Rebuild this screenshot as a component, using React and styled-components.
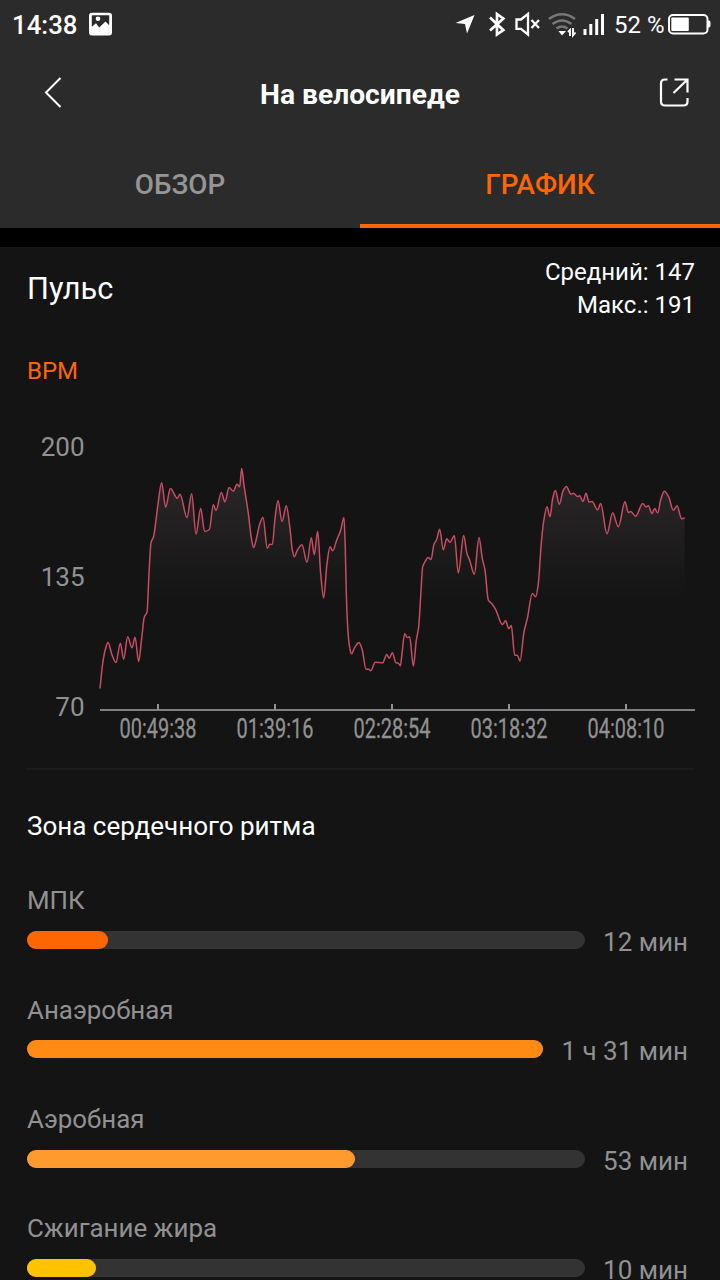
import React from "react";
import styled, { createGlobalStyle } from "styled-components";

const GlobalStyle = createGlobalStyle`
  * { box-sizing: border-box; }
  body {
    margin: 0;
    background: #141414;
    font-family: Roboto, "Noto Sans", sans-serif;
  }
`;

const Screen = styled.div`
  width: 720px;
  height: 1280px;
  overflow: hidden;
  display: flex;
  flex-direction: column;
  background: #141414;
  color: #fff;
`;

const Header = styled.header`
  flex: none;
  height: 228px;
  background: #2b2b2b;
`;

const StatusBar = styled.div`
  display: flex;
  align-items: center;
  justify-content: space-between;
  height: 48px;
  padding: 0 9px 0 12px;
`;

const StatusGroup = styled.div`
  display: flex;
  align-items: center;
`;

const Clock = styled.span`
  font-size: 25.8px;
  font-weight: 500;
  line-height: 32px;
  padding-top: 1px;
  width: 76px;
`;

const BatteryText = styled.span`
  font-size: 24px;
  line-height: 32px;
  padding-top: 1px;
  width: 54px;
  white-space: nowrap;
`;

const NavBar = styled.nav`
  display: grid;
  grid-template-columns: 120px 1fr 120px;
  align-items: center;
  height: 92px;
`;

const IconButton = styled.button`
  display: flex;
  justify-content: ${(p) => (p.$end ? "flex-end" : "flex-start")};
  padding: ${(p) => (p.$end ? "0 29px 4px 0" : "0 0 4px 41px")};
  border: 0;
  background: none;
`;

const Title = styled.h1`
  margin: 0;
  padding-top: 1px;
  text-align: center;
  font-size: 28.2px;
  font-weight: 700;
  line-height: 34px;
`;

const Tabs = styled.div`
  display: grid;
  grid-template-columns: 1fr 1fr;
  height: 88px;
`;

const Tab = styled.button`
  border: 0;
  border-bottom: 4px solid ${(p) => (p.$active ? "#ff6600" : "transparent")};
  padding: 6px 0 0;
  background: none;
  color: ${(p) => (p.$active ? "#ff6600" : "#959595")};
  font: 500 27.8px/34px Roboto, sans-serif;
`;

const Divider = styled.div`
  flex: none;
  height: 19px;
  background: #000;
`;

const PulseHead = styled.section`
  flex: none;
  display: flex;
  justify-content: space-between;
  height: 103px;
  padding: 9px 25px 0 27px;
`;

const PulseTitle = styled.h2`
  margin: 14px 0 0;
  font-size: 30.7px;
  font-weight: 400;
  line-height: 38px;
`;

const Stats = styled.div`
  text-align: right;
  font-size: 24px;
  line-height: 33px;
`;

const Unit = styled.div`
  flex: none;
  height: 80px;
  padding: 6px 27px 0;
  color: #ff6600;
  font-size: 24px;
  line-height: 30px;
`;

const ChartSvg = styled.svg`
  flex: none;
  display: block;
  width: 720px;
  height: 338px;
  font-family: Roboto, sans-serif;
  fill: #919191;
`;

const Rule = styled.div`
  flex: none;
  height: 2px;
  margin: 0 26px;
  background: #1c1c1c;
`;

const Zones = styled.section`
  flex: none;
  padding: 40px 32px 0 27px;
`;

const ZonesTitle = styled.h2`
  margin: 0 0 42.3px;
  font-size: 26px;
  font-weight: 400;
  line-height: 32px;
`;

const Zone = styled.div`
  height: 109.33px;
`;

const ZoneName = styled.div`
  color: #919191;
  font-size: 25.9px;
  line-height: 32px;
`;

const ZoneRow = styled.div`
  display: flex;
  align-items: center;
  gap: 18px;
  margin-top: 7.7px;
  height: 32px;
`;

const Track = styled.div`
  flex: 1;
  height: 18px;
  border-radius: 9px;
  background: #333;
`;

const Fill = styled.div`
  height: 100%;
  width: ${(p) => p.$share}%;
  border-radius: 9px;
  background: ${(p) => p.$color};
`;

const ZoneTime = styled.span`
  padding-top: 4px;
  color: #919191;
  font-size: 26px;
  line-height: 32px;
  white-space: nowrap;
`;

const zones = [
  { name: "МПК", time: "12 мин", share: 14.5, color: "#ff6600" },
  { name: "Анаэробная", time: "1 ч 31 мин", share: 100, color: "#ff8a14" },
  { name: "Аэробная", time: "53 мин", share: 58.8, color: "#ff9b2e" },
  { name: "Сжигание жира", time: "10 мин", share: 12.4, color: "#ffc200" },
];

const ticks = [
  { x: 158, label: "00:49:38" },
  { x: 275, label: "01:39:16" },
  { x: 392, label: "02:28:54" },
  { x: 509, label: "03:18:32" },
  { x: 626, label: "04:08:10" },
];

// Heart rate samples as [offset, depth], three units to a pixel.
const samples = [
  [30,715],[38,640],[46,598],[54,577],[66,614],[78,637],[91,579],[101,627],[113,560],[126,593],[135,561],
  [146,634],[155,565],[163,500],[171,486],[177,370],[183,278],[191,258],[203,170],[215,98],[227,171],
  [241,115],[262,144],[270,132],[291,202],[305,131],[318,252],[332,175],[344,244],[358,238],[370,164],
  [378,181],[394,127],[405,155],[417,112],[430,123],[441,102],[449,110],[455,55],[462,105],[475,190],
  [485,270],[491,292],[500,262],[509,222],[519,202],[532,294],[540,282],[547,283],[555,205],[564,152],
  [576,214],[589,167],[601,245],[607,300],[613,320],[622,300],[636,284],[651,336],[664,263],[673,314],
  [683,243],[692,370],[701,443],[711,340],[720,290],[728,302],[740,270],[752,240],[762,202],[766,300],
  [769,430],[773,530],[778,585],[784,611],[795,590],[807,577],[817,600],[828,657],[836,657],[842,662],
  [856,636],[878,638],[890,613],[898,624],[907,608],[918,638],[925,639],[931,647],[936,610],[944,551],
  [952,562],[959,560],[970,648],[979,570],[986,530],[992,440],[998,350],[1006,333],[1014,322],[1023,328],
  [1032,282],[1040,268],[1049,237],[1060,299],[1070,266],[1080,276],[1093,257],[1105,368],[1121,256],
  [1131,310],[1139,330],[1153,372],[1167,262],[1177,325],[1185,360],[1195,450],[1205,460],[1217,478],
  [1237,523],[1247,512],[1256,535],[1264,526],[1274,615],[1282,615],[1290,633],[1302,545],[1312,505],
  [1327,430],[1337,440],[1345,400],[1353,290],[1360,220],[1371,170],[1380,200],[1388,145],[1396,121],
  [1408,162],[1419,123],[1429,109],[1443,132],[1451,129],[1462,139],[1469,137],[1479,154],[1488,129],
  [1497,156],[1506,154],[1523,179],[1532,160],[1551,251],[1568,188],[1585,230],[1605,155],[1615,187],
  [1622,184],[1637,198],[1658,160],[1668,170],[1675,167],[1686,190],[1694,175],[1703,188],[1713,145],
  [1723,123],[1736,140],[1750,180],[1761,167],[1775,206],[1784,203],
].map(([x, y]) => [90 + x / 3, 20.2 + y / 3]);

// Monotone cubic curve: flat at each peak and trough, smooth in between.
function smoothPath(pts) {
  const slope = (i) => (pts[i + 1][1] - pts[i][1]) / (pts[i + 1][0] - pts[i][0]);
  const tangents = pts.map((_, i) => {
    if (i === 0) return slope(0);
    if (i === pts.length - 1) return slope(i - 1);
    const a = slope(i - 1);
    const b = slope(i);
    return a * b <= 0 ? 0 : (2 * a * b) / (a + b);
  });
  let d = `M${pts[0][0]} ${pts[0][1]}`;
  for (let i = 1; i < pts.length; i++) {
    const [x0, y0] = pts[i - 1];
    const [x1, y1] = pts[i];
    const h = (x1 - x0) / 3;
    d += `C${x0 + h} ${y0 + tangents[i - 1] * h} ${x1 - h} ${y1 - tangents[i] * h} ${x1} ${y1}`;
  }
  return d;
}

const linePath = smoothPath(samples);
const areaPath = `${linePath}V279H100Z`;

const PictureIcon = () => (
  <svg width="24" height="24" viewBox="0 0 24 24">
    <rect x="1" y="0.8" width="23" height="22.7" rx="3" fill="#fff" />
    <path d="M3.8 3.3H21.2V13.2L17.5 9.4L11.2 15.5L8 11.3L3.8 14.8Z" fill="#2b2b2b" />
    <circle cx="10" cy="6.7" r="2.3" fill="#fff" />
  </svg>
);

const StatusIcons = () => (
  <svg width="161" height="48" viewBox="453 0 161 48" fill="none" stroke="#fff">
    <path d="M455.5 23L474.5 15L467 33.5L465 24Z" fill="#fff" stroke="none" />
    <path d="M490 17.5L503.3 30L497 34.5V14L503.3 18.5L490 30.5" strokeWidth="2.7" />
    <path d="M516.5 19.5H521L528 13.8V34.5L521 28.8H516.5Z" strokeWidth="2.3" />
    <path d="M531.5 20L539 28M539 20L531.5 28" strokeWidth="2.2" />
    <g stroke="#777" strokeWidth="2.6">
      <path d="M549 19Q562 9.5 575 19" />
      <path d="M552.5 24Q562 17 571.5 24" />
      <path d="M556.5 28.5Q562 24.5 567.5 28.5" />
    </g>
    <path d="M558.5 31H566L562 35.5Z" fill="#fff" stroke="none" />
    <path d="M570 36V30L568 32M573 28V35.5L575.5 32.5" strokeWidth="1.9" />
    <path d="M585 29V35M590.8 24V35M596.7 19V35M602.5 14V35" strokeWidth="3" />
  </svg>
);

const BatteryIcon = () => (
  <svg width="43" height="22" viewBox="0 0 43 22">
    <rect x="1" y="2" width="38.5" height="18.5" rx="4" fill="none" stroke="#fff" strokeWidth="2" />
    <rect x="3.3" y="4.5" width="17.5" height="13.5" rx="1" fill="#fff" />
    <path d="M39.5 7.5h1.500q1.500 0 1.500 2v3q0 2-1.500 2h-1.500z" fill="#fff" />
  </svg>
);

const BackIcon = () => (
  <svg width="22" height="34" viewBox="0 0 22 34" fill="none" stroke="#fff" strokeWidth="2">
    <path d="M19.5 3L5 17.5L19.5 32" />
  </svg>
);

const ShareIcon = () => (
  <svg width="32" height="32" viewBox="0 0 32 32" fill="none" stroke="#fff" strokeWidth="2.2">
    <path d="M8.5 3.5H6Q2 3.5 2 7.5V25.5Q2 29.5 6 29.5H24.5Q28.5 29.5 28.5 25.5V22" />
    <path d="M15.5 3.5H28.5V16.5M28.2 3.8L14.5 17" />
  </svg>
);

const PulseChart = () => (
  <ChartSvg viewBox="0 0 720 338">
    <defs>
      <linearGradient id="pulseArea" gradientUnits="userSpaceOnUse" x1="0" y1="39" x2="0" y2="170">
        <stop offset="0" stopColor="#2c2829" />
        <stop offset="1" stopColor="#141414" />
      </linearGradient>
    </defs>
    <g fontSize="26" textAnchor="end">
      <text x="84.5" y="25.5">200</text>
      <text x="84.5" y="155.5">135</text>
      <text x="84.5" y="285.5">70</text>
    </g>
    <path d={areaPath} fill="url(#pulseArea)" />
    <path d={linePath} fill="none" stroke="#c94d62" strokeWidth="1.5" />
    <path d="M100 280H695" stroke="#808080" strokeWidth="2" />
    {ticks.map((t) => (
      <g key={t.label}>
        <path d={`M${t.x} 274V280`} stroke="#919191" strokeWidth="2" />
        <text
          x={t.x - 38.5}
          y="308"
          fontSize="27.5"
          textLength="77"
          lengthAdjust="spacingAndGlyphs"
          stroke="#919191"
          strokeWidth="0.3"
        >
          {t.label}
        </text>
      </g>
    ))}
  </ChartSvg>
);

export default function App() {
  return (
    <Screen>
      <GlobalStyle />
      <Header>
        <StatusBar>
          <StatusGroup>
            <Clock>14:38</Clock>
            <PictureIcon />
          </StatusGroup>
          <StatusGroup>
            <StatusIcons />
            <BatteryText>52 %</BatteryText>
            <BatteryIcon />
          </StatusGroup>
        </StatusBar>
        <NavBar>
          <IconButton aria-label="Назад"><BackIcon /></IconButton>
          <Title>На велосипеде</Title>
          <IconButton $end aria-label="Поделиться"><ShareIcon /></IconButton>
        </NavBar>
        <Tabs>
          <Tab>ОБЗОР</Tab>
          <Tab $active>ГРАФИК</Tab>
        </Tabs>
      </Header>
      <Divider />
      <PulseHead>
        <PulseTitle>Пульс</PulseTitle>
        <Stats>
          <div>Средний: 147</div>
          <div>Макс.: 191</div>
        </Stats>
      </PulseHead>
      <Unit>BPM</Unit>
      <PulseChart />
      <Rule />
      <Zones>
        <ZonesTitle>Зона сердечного ритма</ZonesTitle>
        {zones.map((z) => (
          <Zone key={z.name}>
            <ZoneName>{z.name}</ZoneName>
            <ZoneRow>
              <Track><Fill $share={z.share} $color={z.color} /></Track>
              <ZoneTime>{z.time}</ZoneTime>
            </ZoneRow>
          </Zone>
        ))}
      </Zones>
    </Screen>
  );
}
